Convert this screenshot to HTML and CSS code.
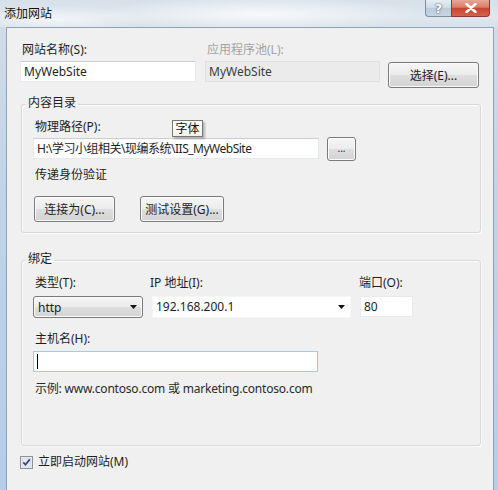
FILE: index.html
```html
<!DOCTYPE html>
<html lang="zh-CN">
<head>
<meta charset="utf-8">
<title>添加网站</title>
<link rel="stylesheet" href="styles.css">
</head>
<body>
<div class="window">
  <div class="titlebar">
    <span class="title">添加网站</span>
    <div class="caption-btns">
      <div class="cap help">?</div>
      <div class="cap close">
        <svg width="12" height="10" viewBox="0 0 12 10"><path d="M1.5 1 L10.5 9 M10.5 1 L1.5 9" stroke="#fff" stroke-width="2.4" stroke-linecap="round"/></svg>
      </div>
    </div>
  </div>
  <div class="client">
    <div class="top-grid">
      <div class="lbl">网站名称(S):</div>
      <div class="lbl disabled">应用程序池(L):</div>
      <div></div>
      <div class="tb site">MyWebSite</div>
      <div class="tb tb-dis">MyWebSite</div>
      <div class="btn btn-select">选择(E)...</div>
    </div>

    <fieldset class="group g1">
      <legend>内容目录</legend>
      <div class="lbl tip-anchor">物理路径(P):<span class="tooltip">字体</span></div>
      <div class="path-row">
        <div class="tb path">H:\学习小组相关\现编系统\IIS_MyWebSite</div>
        <div class="btn btn-browse">...</div>
      </div>
      <div class="lbl pass">传递身份验证</div>
      <div class="btn-row">
        <div class="btn btn-connect">连接为(C)...</div>
        <div class="btn btn-test">测试设置(G)...</div>
      </div>
    </fieldset>

    <fieldset class="group g2">
      <legend>绑定</legend>
      <div class="bind-grid">
        <div class="lbl">类型(T):</div>
        <div class="lbl ip-lbl">IP 地址(I):</div>
        <div class="lbl port-lbl">端口(O):</div>
        <div class="combo"><span>http</span><svg class="arrow" width="7" height="4" viewBox="0 0 7 4"><path d="M0 0 H7 L3.5 4 Z" fill="#111"/></svg></div>
        <div class="tb ipbox"><span>192.168.200.1</span><svg class="arrow" width="7" height="4" viewBox="0 0 7 4"><path d="M0 0 H7 L3.5 4 Z" fill="#111"/></svg></div>
        <div class="tb port">80</div>
      </div>
      <div class="lbl host-lbl">主机名(H):</div>
      <div class="tb host"><span class="caret"></span></div>
      <div class="lbl example">示例: www.contoso.com 或 marketing.contoso.com</div>
    </fieldset>

    <div class="check-row">
      <span class="checkbox">
        <svg width="13" height="13" viewBox="0 0 13 13">
          <rect x="0.5" y="0.5" width="12" height="12" fill="#f4f4f4" stroke="#8f9296"/>
          <rect x="2" y="2" width="9" height="9" fill="#e6e9ee" stroke="#c9ced6" stroke-width="0.6"/>
          <path d="M3.3 6.4 L5.5 8.8 L9.8 3.4" fill="none" stroke="#33457a" stroke-width="1.7"/>
        </svg>
      </span>
      <span class="check-label">立即启动网站(M)</span>
    </div>
  </div>
</div>
</body>
</html>
```

FILE: styles.css
```css
html, body {
  margin: 0;
  padding: 0;
}

body {
  width: 498px;
  height: 490px;
  overflow: hidden;
  font-family: "Noto Sans", "Noto Sans CJK SC", sans-serif;
  font-size: 12px;
  color: #1e1e1e;
}

.window {
  width: 498px;
  height: 490px;
  display: flex;
  flex-direction: column;
  background: linear-gradient(180deg, #d3dde8 0%, #c0d3e8 40%, #b5cde8 100%);
}

.titlebar {
  height: 27px;
  flex: none;
  display: flex;
  align-items: flex-start;
  background:
    radial-gradient(ellipse 160px 18px at 260px 14px, rgba(255,255,255,0.75), rgba(255,255,255,0)),
    radial-gradient(ellipse 90px 14px at 60px 20px, rgba(255,255,255,0.6), rgba(255,255,255,0)),
    linear-gradient(180deg, #d6e0ea 0%, #dfe7ef 60%, #d8e1ea 100%);
}

.title {
  padding-left: 4px;
  line-height: 27px;
  color: #111;
}

.caption-btns {
  margin-left: auto;
  margin-right: 8px;
  display: flex;
}

.cap {
  box-sizing: border-box;
  height: 17px;
  display: flex;
  align-items: center;
  justify-content: center;
}

.help {
  width: 26px;
  border: 1px solid #7e8ea1;
  border-top: none;
  border-right: none;
  border-radius: 0 0 0 4px;
  background: linear-gradient(180deg, #e7edf4 0%, #cfd9e4 50%, #bccada 51%, #c9d5e2 100%);
  color: #fff;
  font-weight: bold;
  font-size: 13px;
  font-family: "DejaVu Sans", sans-serif;
  text-shadow: 0 0 2px #4a5a70, 0 0 1px #4a5a70;
  line-height: 15px;
}

.close {
  width: 39px;
  border: 1px solid #8a3a2e;
  border-top: none;
  border-radius: 0 0 4px 0;
  background: linear-gradient(180deg, #e8a797 0%, #d97c67 45%, #c8452f 52%, #d3644c 100%);
}

.client {
  flex: 1;
  margin: 0 4px 0 6px;
  border: 1px solid #8fa2b8;
  border-bottom: none;
  background: #f0f0f0;
  padding: 14px 0 0 13px;
}

.lbl {
  line-height: 16px;
  padding-left: 2px;
  white-space: nowrap;
}

.disabled {
  color: #a3a3a3;
}

.tb {
  box-sizing: border-box;
  height: 21px;
  line-height: 19px;
  padding: 0 3px;
  background: #fff;
  border: 1px solid #e3e9ef;
  border-top-color: #c9ced6;
  white-space: nowrap;
  color: #1e1e1e;
}

.tb-dis {
  background: #ebebeb;
  border-color: #e0e0e0;
  color: #3c3c3c;
}

.btn {
  box-sizing: border-box;
  height: 26px;
  border: 1px solid #7a7a7a;
  border-radius: 3px;
  background: linear-gradient(180deg, #f6f6f6 0%, #ececec 48%, #dedede 52%, #d3d3d3 100%);
  box-shadow: inset 0 0 0 1px #fbfbfb;
  display: flex;
  align-items: center;
  justify-content: center;
  white-space: nowrap;
  color: #1e1e1e;
}

/* Top row */
.top-grid {
  display: grid;
  grid-template-columns: 177px 175px 91px;
  grid-template-rows: 16px auto;
  column-gap: 8px;
  row-gap: 3px;
}

.site {
  width: 176px;
}

.btn-select {
  align-self: start;
  margin-top: 1px;
}

/* Group boxes */
.group {
  box-sizing: border-box;
  width: 460px;
  margin: 7px 0 0 1px;
  border: 1px solid #d5d9dd;
  border-radius: 3px;
  box-shadow: inset 1px 1px 0 #fcfcfc, 1px 1px 0 #fcfcfc;
  padding: 6px 11px 10px 11px;
  min-width: 0;
}

.group legend {
  margin-left: -7px;
  padding: 0 2px 2px 2px;
  line-height: 16px;
  color: #1e1e1e;
}

.g2 {
  margin-top: 18px;
  padding-bottom: 48px;
}

.tip-anchor {
  position: relative;
}

.tooltip {
  position: absolute;
  left: 139px;
  top: 1px;
  box-sizing: border-box;
  width: 31px;
  height: 17px;
  border: 1px solid #767676;
  background: linear-gradient(180deg, #ffffff 0%, #f3f3ea 100%);
  box-shadow: 2px 2px 2px rgba(0, 0, 0, 0.25);
  line-height: 15px;
  text-align: center;
  padding: 0;
  color: #111;
}

.path-row {
  display: flex;
  align-items: flex-start;
  gap: 8px;
  margin-top: 2px;
}

.path {
  width: 286px;
  margin-top: 1px;
  letter-spacing: -0.5px;
}

.btn-browse {
  width: 29px;
  height: 24px;
  padding-bottom: 2px;
  font-size: 10px;
}

.pass {
  margin-top: 6px;
}

.btn-row {
  display: flex;
  gap: 25px;
  margin-top: 13px;
  padding-left: 1px;
}

.btn-connect {
  width: 81px;
}

.btn-test {
  width: 84px;
}

/* Binding */
.bind-grid {
  display: grid;
  grid-template-columns: 110px 199px 53px;
  grid-template-rows: 16px auto;
  column-gap: 9px;
  row-gap: 5px;
  align-items: start;
}

.ip-lbl {
  padding-left: 0;
  margin-left: -2px;
}

.port-lbl {
  padding-left: 0;
  margin-left: -1px;
}

.combo {
  box-sizing: border-box;
  height: 22px;
  border: 1px solid #7a7a7a;
  border-radius: 3px;
  background: linear-gradient(180deg, #f6f6f6 0%, #ececec 48%, #dedede 52%, #d3d3d3 100%);
  box-shadow: inset 0 0 0 1px #fbfbfb;
  display: flex;
  align-items: center;
  justify-content: space-between;
  padding: 0 5px 0 4px;
}

.ipbox {
  height: 22px;
  line-height: 20px;
  display: flex;
  align-items: center;
  justify-content: space-between;
  padding: 0 5px 0 3px;
  border-color: #f4f6f8;
}

.arrow {
  flex: none;
}

.port {
  width: 53px;
  border-color: #e6ebf0;
}

.host-lbl {
  margin-top: 13px;
}

.host {
  width: 285px;
  margin-top: 4px;
  border-color: #a9c8e6;
  display: flex;
  align-items: center;
}

.caret {
  display: block;
  width: 1px;
  height: 15px;
  background: #000;
}

.example {
  margin-top: 9px;
  color: #2a2a2a;
  letter-spacing: -0.2px;
}

/* Checkbox */
.check-row {
  display: flex;
  align-items: center;
  gap: 5px;
  margin-top: 8px;
  line-height: 16px;
}

.checkbox {
  display: flex;
  width: 13px;
  height: 13px;
}
```
